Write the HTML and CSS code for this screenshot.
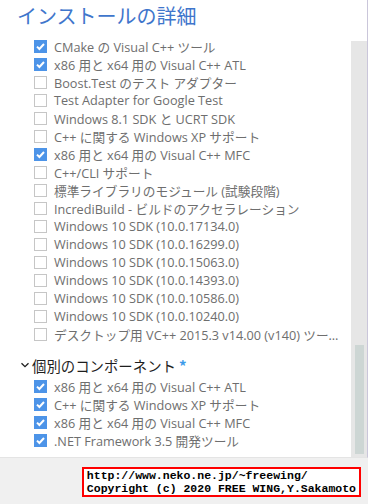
FILE: index.html
```html
<!DOCTYPE html>
<html lang="ja">
<head>
    <meta charset="UTF-8">
    <meta name="viewport" content="width=device-width, initial-scale=1.0">
    <title>インストールの詳細</title>
    <link rel="stylesheet" href="styles.css">
</head>
<body>

    <div class="panel">
        <h1>インストールの詳細</h1>

        <div class="panel-body">
            <div class="list">
                <ul class="options">
                    <li class="checked"><span class="box"></span>CMake の Visual C++ ツール</li>
                    <li class="checked"><span class="box"></span>x86 用と x64 用の Visual C++ ATL</li>
                    <li><span class="box"></span>Boost.Test のテスト アダプター</li>
                    <li><span class="box"></span>Test Adapter for Google Test</li>
                    <li><span class="box"></span>Windows 8.1 SDK と UCRT SDK</li>
                    <li><span class="box"></span>C++ に関する Windows XP サポート</li>
                    <li class="checked"><span class="box"></span>x86 用と x64 用の Visual C++ MFC</li>
                    <li><span class="box"></span>C++/CLI サポート</li>
                    <li><span class="box"></span>標準ライブラリのモジュール (試験段階)</li>
                    <li><span class="box"></span>IncrediBuild - ビルドのアクセラレーション</li>
                    <li><span class="box"></span>Windows 10 SDK (10.0.17134.0)</li>
                    <li><span class="box"></span>Windows 10 SDK (10.0.16299.0)</li>
                    <li><span class="box"></span>Windows 10 SDK (10.0.15063.0)</li>
                    <li><span class="box"></span>Windows 10 SDK (10.0.14393.0)</li>
                    <li><span class="box"></span>Windows 10 SDK (10.0.10586.0)</li>
                    <li><span class="box"></span>Windows 10 SDK (10.0.10240.0)</li>
                    <li><span class="box"></span><span class="clip">デスクトップ用 VC++ 2015.3 v14.00 (v140) ツール セット</span></li>
                </ul>

                <div class="section-title">
                    <svg class="chevron" width="10" height="10" viewBox="0 0 10 10">
                        <path d="M1.5 3.2 L5 6.7 L8.5 3.2" fill="none" stroke="#1e1e1e" stroke-width="1.3"/>
                    </svg>
                    個別のコンポーネント<span class="star">*</span>
                </div>

                <ul class="options">
                    <li class="checked"><span class="box"></span>x86 用と x64 用の Visual C++ ATL</li>
                    <li class="checked"><span class="box"></span>C++ に関する Windows XP サポート</li>
                    <li class="checked"><span class="box"></span>x86 用と x64 用の Visual C++ MFC</li>
                    <li class="checked"><span class="box"></span>.NET Framework 3.5 開発ツール</li>
                </ul>
            </div>

            <!-- scrollbar -->
            <div class="scrollbar">
                <div class="thumb"></div>
            </div>
        </div>
    </div>

    <div class="footer">
        <div class="credit">http://www.neko.ne.jp/~freewing/<br>Copyright (c) 2020 FREE WING,Y.Sakamoto</div>
    </div>

</body>
</html>
```

FILE: styles.css
```css
* {
    margin: 0;
    padding: 0;
    box-sizing: border-box;
}

body {
    width: 368px;
    height: 504px;
    background-color: #f0f0f0;
    font-family: "Open Sans", "Noto Sans CJK JP", sans-serif;
    overflow: hidden;
}

.panel {
    height: 458px;
    background-color: #ffffff;
    border-right: 1px solid #cac6da;
    border-bottom: 1px solid #e4e4e4;
    width: 368px;
    display: flex;
    flex-direction: column;
}

h1 {
    font-family: "Noto Sans CJK JP", sans-serif;
    font-weight: normal;
    font-size: 20px;
    line-height: 32px;
    color: #3f76cc;
    padding-left: 17px;
    height: 37px;
}

.panel-body {
    flex: 1;
    display: flex;
}

.list {
    flex: 1;
}

.options {
    list-style: none;
    padding-left: 34px;
}

.options li {
    display: flex;
    align-items: center;
    height: 18px;
    font-size: 12.7px;
    color: #6e6e6e;
    white-space: nowrap;
}

.box {
    width: 13px;
    height: 13px;
    border: 1px solid #c6c6c6;
    background-color: #ffffff;
    margin-right: 7px;
    flex-shrink: 0;
}

.checked .box {
    border-color: #4d94e8;
    background-color: #4d94e8;
    background-image: url("data:image/svg+xml;utf8,<svg xmlns='http://www.w3.org/2000/svg' width='11' height='11' viewBox='0 0 11 11'><path d='M2 5.6 L4.4 8 L9 3' fill='none' stroke='white' stroke-width='2'/></svg>");
    background-repeat: no-repeat;
    background-position: center;
}

.clip {
    display: block;
    width: 288px;
    overflow: hidden;
    text-overflow: ellipsis;
}

.section-title {
    display: flex;
    align-items: center;
    height: 24px;
    margin-top: 10px;
    padding-left: 20px;
    font-family: "Noto Sans CJK JP", sans-serif;
    font-size: 14.4px;
    color: #1e1e1e;
}

.chevron {
    margin-right: 2px;
}

.star {
    color: #3d9be9;
    font-size: 15px;
    margin-left: 3px;
    font-weight: bold;
}

.scrollbar {
    width: 16px;
    margin-top: 4px;
    background-color: #e6e6e6;
    display: flex;
    flex-direction: column;
    justify-content: flex-end;
    padding: 0 3px 3px 4px;
}

.thumb {
    height: 109px;
    background-color: #cdd6d4;
}

.footer {
    display: flex;
    justify-content: flex-end;
    padding: 9px 7px 0 0;
}

.credit {
    border: 2px solid #ff0000;
    background-color: #ffffff;
    font-family: "Liberation Mono", monospace;
    font-weight: bold;
    font-size: 11.5px;
    line-height: 13px;
    color: #000000;
    padding: 0 3px 0 3px;
    white-space: nowrap;
}
```
